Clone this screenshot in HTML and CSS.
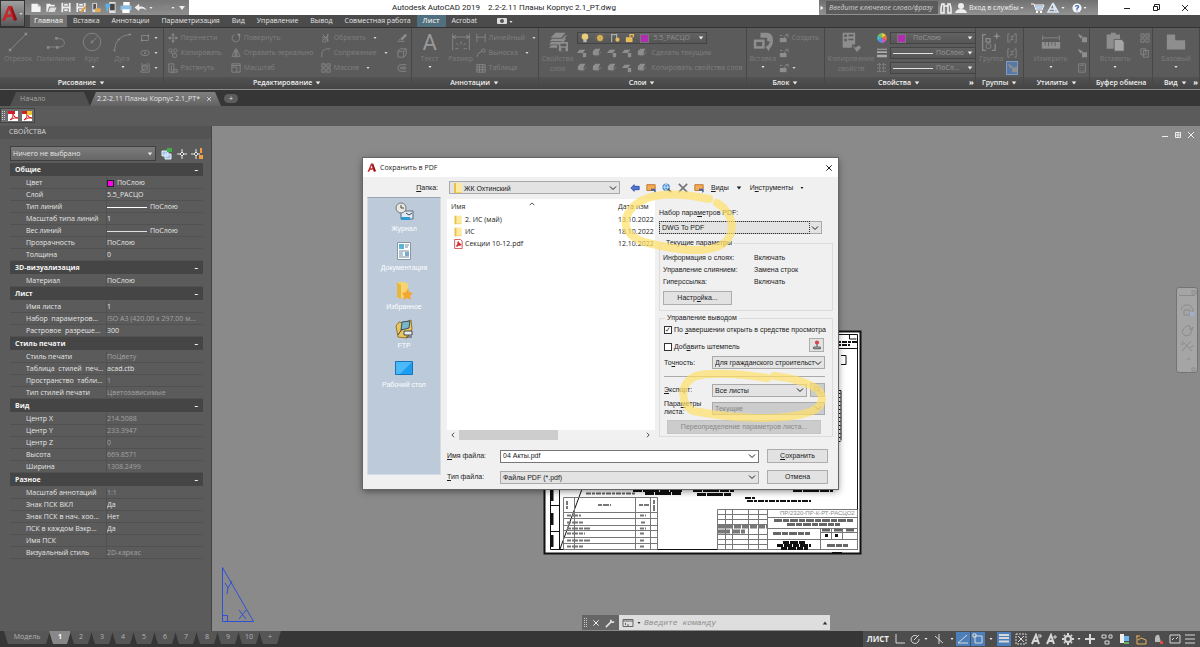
FILE: index.html
```html
<!DOCTYPE html>
<html lang="ru">
<head>
<meta charset="utf-8">
<title>Autodesk AutoCAD 2019</title>
<link rel="stylesheet" href="styles.css">
</head>
<body>
<svg class="defs" aria-hidden="true">
  <symbol id="logo" viewBox="0 0 20 20"><path fill="#c4262b" d="M1 18 8 1h4l5 15-4 1-1-4-6 1-1 3zM7 11l4-1-2-5z"/><path fill="#8e1419" d="M12 1l6 15-3 2-4-14z"/></symbol>
  <symbol id="down" viewBox="0 0 8 8"><path fill="currentColor" d="M1 2h6L4 6z"/></symbol>
  <symbol id="chev" viewBox="0 0 8 8"><path fill="none" stroke="currentColor" d="M1 2.500l3 3 3-3"/></symbol>
  <symbol id="new" viewBox="0 0 14 12"><path fill="#f4f4f4" d="M2 2h7l3 3v6H2z"/><path fill="#aaa" d="M9 2v3h3z"/></symbol>
  <symbol id="open" viewBox="0 0 14 12"><path fill="#f0f0f0" d="M2 2h4l1 1h4v2H5L3 11H2z"/><path fill="#ddd" d="M6 6h7l-2 5H4z"/></symbol>
  <symbol id="save" viewBox="0 0 14 12"><path fill="#eee" d="M2 1h10v10H2z"/><path fill="#777" d="M4 1h6v4H4zM4 7h6v4H4z"/><path fill="#eee" d="M5 2h4v2H5zM5 8h4v2H5z"/></symbol>
  <symbol id="saveas" viewBox="0 0 14 12"><use href="#save"/><path stroke="#e89a35" stroke-width="2" d="M7 11l5-6"/></symbol>
  <symbol id="openweb" viewBox="0 0 14 12"><path fill="#ddd" d="M3 1h5v10H3z"/><path fill="#555" d="M4 2h3v6H4z"/><path fill="#e4ac55" d="M6 7h6v4H6z"/></symbol>
  <symbol id="saveweb" viewBox="0 0 14 12"><path fill="#ddd" d="M5 0h7v12H5z"/><path fill="#444" d="M6 2h5v7H6z"/><path fill="#5bb3e8" d="M1 2h5v4H4v4H2V6H1z"/></symbol>
  <symbol id="print" viewBox="0 0 14 12"><path fill="#fff" d="M4 0h7v4H4z"/><path fill="#8bc0e6" d="M1 4h12v5H1z"/><path fill="#fff" d="M3 8h8v4H3z"/></symbol>
  <symbol id="undo" viewBox="0 0 14 12"><path fill="currentColor" d="M0 6l5-4v3q6-1 8 4-4-3-8-1v2z"/></symbol>
  <symbol id="binoc" viewBox="0 0 14 12"><path fill="none" stroke="#f2f2f2" stroke-width="1.500" d="M3 2h2v9H2V6zM9 2h2l1 4v5H9zM5 4h4"/></symbol>
  <symbol id="person" viewBox="0 0 14 12"><circle cx="7" cy="4" r="3" fill="#eee"/><path fill="#eee" d="M1 11q1-4 6-4t6 4z"/></symbol>
  <symbol id="cart" viewBox="0 0 14 12"><path fill="none" stroke="#fff" d="M0 2h3l2 6h6l2-5H4"/><path fill="#b7d2ec" d="M4 4h8l-1 3H5z"/><path fill="#fff" d="M5 9h2v2H5zM9 9h2v2H9z"/></symbol>
  <symbol id="a360" viewBox="0 0 14 12"><path fill="none" stroke="#dce9f6" stroke-width="1.500" d="M7 1L2 10h10L7 1l2 8M4 7h7"/></symbol>
  <symbol id="help" viewBox="0 0 12 12"><circle cx="6" cy="6" r="5.500" fill="#f4f7fb"/><path fill="none" stroke="#3a68a8" stroke-width="1.500" d="M4 4.500Q4 3 6 3t2 1.500q0 1-2 2V8M6 9v1"/></symbol>

  <symbol id="line" viewBox="0 0 24 24"><path class="st" d="M3 21L21 3"/><path class="fi" d="M1 20h3v3H1zM20 1h3v3h-3z"/></symbol>
  <symbol id="pline" viewBox="0 0 24 24"><path class="st" d="M3 18h14q5-1 5-5t-5-5h-4"/><path class="fi" d="M1 17h3v3H1zM12 17h3v3h-3zM11 6h3v3h-3z"/></symbol>
  <symbol id="circle" viewBox="0 0 24 24"><circle class="st" cx="12" cy="12" r="10.500"/><path class="st" d="M12 12l6-6M10 12h4M12 10v4"/></symbol>
  <symbol id="arc" viewBox="0 0 24 24"><path class="st" d="M3 22Q4 5 21 3"/><path class="fi" d="M2 21h2v2H2zM7 8h2v2H7zM20 2h3v2h-3z"/></symbol>
  <symbol id="rect" viewBox="0 0 12 12"><path class="st" d="M2 3h8v6H2z"/><path class="fi" d="M1 8h2v2H1zM9 2h2v2H9z"/></symbol>
  <symbol id="ellipse" viewBox="0 0 12 12"><ellipse class="st" cx="6" cy="6" rx="5" ry="3"/><path class="fi" d="M5 5h2v2H5z"/></symbol>
  <symbol id="hatch" viewBox="0 0 12 12"><path class="st" d="M2.500 2.500h6v6h-6zM1 1h2M9 1h2v10H1v-2M2 6l4-4M3 9l5-6"/></symbol>
  <symbol id="move" viewBox="0 0 12 12"><path class="st" d="M6 1v10M1 6h10"/><path class="fi" d="M6 0l2 3H4zM6 12l2-3H4zM0 6l3-2v4zM12 6L9 4v4z"/></symbol>
  <symbol id="copy" viewBox="0 0 12 12"><circle class="st" cx="3" cy="3" r="2"/><circle class="st" cx="9" cy="3" r="2"/><circle class="st" cx="8" cy="9" r="2.500"/><path class="st" d="M4 5l2 3"/></symbol>
  <symbol id="stretch" viewBox="0 0 12 12"><path class="st" d="M1 1h6v10H1zM7 8h4v3H4M4 3v6M3 8l1 1 1-1"/></symbol>
  <symbol id="rotate" viewBox="0 0 12 12"><path class="st" d="M4 2a4.500 4.500 0 1 0 5 1"/><path class="fi" d="M7 1h4v4z"/></symbol>
  <symbol id="mirror" viewBox="0 0 12 12"><path class="st" d="M5 2L1 10h4zM7 2l4 8H7zM6 0v12"/></symbol>
  <symbol id="scale" viewBox="0 0 12 12"><path class="st" d="M1 1h10v10H1zM1 5h6v6M1 3h10"/></symbol>
  <symbol id="trim" viewBox="0 0 12 12"><path class="st" d="M2 2l7 7M9 2L6 6M1 5h5M8 1v10"/><circle class="st" cx="4" cy="9" r="2"/></symbol>
  <symbol id="fillet" viewBox="0 0 12 12"><path class="st" d="M1 11V7q0-5 6-6h4"/></symbol>
  <symbol id="array" viewBox="0 0 12 12"><path class="st" d="M1 1h4v4H1zM7 1h4v4H7zM1 7h4v4H1zM7 7h4v4H7zM3 3h1M9 3h1"/></symbol>
  <symbol id="erase" viewBox="0 0 12 12"><path class="fi" d="M4 7l6-6 2 2-6 6z"/><path class="st" d="M1 10h8M4 7l-2 2"/></symbol>
  <symbol id="box" viewBox="0 0 12 12"><path class="st" d="M1 4h7v7H1zM1 4l3-3h7v7l-3 3M8 4l3-3"/></symbol>
  <symbol id="offset" viewBox="0 0 12 12"><path class="st" d="M11 2H5Q1 2 1 6t4 4h6M11 5H6Q4 5 4 6t2 1h5"/></symbol>
  <symbol id="dim" viewBox="0 0 24 24"><path class="st" d="M2 2v20M22 2v20M2 6h20M2 6l4-2M2 6l4 2M22 6l-4-2M22 6l-4 2M12 11v4M6 13l3 3M18 13l-3 3M5 20h4M15 20h4"/></symbol>
  <symbol id="lindim" viewBox="0 0 12 12"><path class="st" d="M1 1v10M11 1v10M1 5h10"/></symbol>
  <symbol id="leader" viewBox="0 0 12 12"><path class="st" d="M1 11l2-5 4-2"/><circle class="st" cx="9" cy="3" r="2"/></symbol>
  <symbol id="tbl" viewBox="0 0 12 12"><path class="st" d="M1 2h10v9H1zM1 5h10M4 2v9M8 2v9M1 8h10"/></symbol>
  <symbol id="layers" viewBox="0 0 24 24"><path class="fi" d="M3 7l6-6h12l-5 6zM2 11l3-3h12l5-5v2l-5 6zM1 15l3-3h12l5-5v2l-5 6zM1 19l3-3h7v3zM13 12h11v11H13z"/><path fill="#5b5b5b" d="M15 14h7v3h-7zM16 19h5v4h-5z"/></symbol>
  <symbol id="lay" viewBox="0 0 12 12"><path class="fi" d="M0 6l3-4h7L7 6z"/><path class="fi" d="M7 6h4v5H7z"/></symbol>
  <symbol id="lay2" viewBox="0 0 12 12"><path class="fi" d="M1 4l3-3h6L8 5v3l-4 1-3-1z"/><path class="st" d="M6 10l5-5"/></symbol>
  <symbol id="insert" viewBox="0 0 24 24"><path class="fi" d="M1 9h13v11H1z"/><path fill="#5b5b5b" d="M4 12h7v5H4z"/><path class="fi" d="M9 1h8q7 1 7 9 0 7-4 10l-1 3-4-5q5-3 5-7h-3V7H9z"/></symbol>
  <symbol id="blk" viewBox="0 0 12 12"><path class="fi" d="M1 6h8v5H1z"/><path class="st" d="M5 7l5-6M8 2h3v3M1 3h3"/></symbol>
  <symbol id="match" viewBox="0 0 24 24"><path class="fi" d="M2 1h15v14h-4v4H2z"/><path fill="#5b5b5b" d="M4 3h3v3H4zM9 3h6v2H9zM4 8h3v3H4zM9 8h6v2H9z"/><path class="fi" d="M13 15l4 4 5-3 2 3-5 5z"/></symbol>
  <symbol id="wheel" viewBox="0 0 12 12"><path fill="#e9c43f" d="M6 6V0a6 6 0 0 1 5 3z"/><path fill="#e6713d" d="M6 6l5-3a6 6 0 0 1 0 6z"/><path fill="#c95bc0" d="M6 6l5 3a6 6 0 0 1-5 3z"/><path fill="#558de0" d="M6 6v6a6 6 0 0 1-5-3z"/><path fill="#44b9c8" d="M6 6L1 9a6 6 0 0 1 0-6z"/><path fill="#75c45b" d="M6 6L1 3a6 6 0 0 1 5-3z"/></symbol>
  <symbol id="lw" viewBox="0 0 12 12"><path fill="#ababab" d="M0 1h12v1H0zM0 4h12v2H0zM0 8h12v3H0z"/></symbol>
  <symbol id="lt" viewBox="0 0 12 12"><path class="st" d="M0 2h12M0 6h12M0 10h12M3 0v12M8 0v12" stroke-dasharray="2 1"/></symbol>
  <symbol id="group" viewBox="0 0 24 24"><path class="st" stroke-width="1.500" d="M6 3H2v19h4M13 22h4v-8M6 8h5v4H6z"/><circle class="st" cx="9" cy="17" r="3"/><path class="fi" d="M19 0l1 4 4 1-4 1-1 4-1-4-4-1 4-1z"/></symbol>
  <symbol id="grp" viewBox="0 0 12 12"><path class="st" d="M3 1H1v10h2M9 1h2v10H9M4 4h3M5 8h3M3 10l6-8"/></symbol>
  <symbol id="measure" viewBox="0 0 24 24"><path class="st" d="M2 7h20M2 4v6M22 4v6"/><path class="fi" d="M1 12h22v8H1z"/><path stroke="#5b5b5b" d="M5 12v4M9 12v5M13 12v4M17 12v5"/></symbol>
  <symbol id="pick" viewBox="0 0 12 12"><path class="fi" d="M1 1l6 3-3 3zM6 5h6v6H6z"/></symbol>
  <symbol id="calc" viewBox="0 0 12 12"><path class="st" d="M2 1h8v10H2zM4 3h4M4 6h1M7 6h1M4 9h1M7 9h1"/></symbol>
  <symbol id="paste" viewBox="0 0 24 24"><path class="fi" d="M2 3h16v17H2zM7 1h6v4H7z"/><path fill="#a5a5a5" stroke="#5b5b5b" d="M11 9h9l3 3v11H11z"/></symbol>
  <symbol id="pages" viewBox="0 0 12 12"><path class="st" d="M1 1h6v7H1zM4 3h6v8H4z"/></symbol>
  <symbol id="base" viewBox="0 0 24 24"><path class="fi" d="M1 3h10v7h12v11H1z"/></symbol>
  <symbol id="bulb" viewBox="0 0 12 12"><circle cx="6" cy="4.500" r="4" fill="#e9cd7b"/><path fill="#bbb" d="M4 8h4v3H4z"/></symbol>
  <symbol id="sun" viewBox="0 0 12 12"><circle cx="6" cy="6" r="3.500" fill="#e9bd5b"/><path stroke="#b8984e" stroke-dasharray="1 1" d="M6 0v12M0 6h12M2 2l8 8M10 2l-8 8"/></symbol>
  <symbol id="vp" viewBox="0 0 12 12"><path fill="none" stroke="#ccc" d="M2 1v10M8 1v6M2 2h6"/><circle cx="9" cy="8" r="2.500" fill="#e9bd5b"/></symbol>
  <symbol id="lock" viewBox="0 0 12 12"><path fill="#ebbb5c" d="M1 5h8v6H1z"/><path fill="none" stroke="#ebbb5c" stroke-width="1.500" d="M6 5V2h4v3"/></symbol>

  <symbol id="pdf" viewBox="0 0 12 12"><path fill="#fff" d="M1 1h10v10H1z"/><path fill="#cf2027" d="M1 1h7v3H1z"/><path fill="none" stroke="#cf2027" d="M3 10q4-3 3-6 1 4 5 4-4-1-8 2"/></symbol>
  <symbol id="fold" viewBox="0 0 12 12"><path fill="#f5d267" d="M2 1h8v10H2z"/><path fill="#fde9a0" d="M3 1h7v9H3z"/><path fill="#eac04d" d="M2 1h2v10H2z"/></symbol>
  <symbol id="back" viewBox="0 0 12 12"><path fill="#4d78d8" stroke="#2c489c" d="M1 6l4-4v2h6v4H5v2z"/></symbol>
  <symbol id="up" viewBox="0 0 12 12"><path fill="#f4ab4f" stroke="#b76a28" d="M1 2h10v7H1z"/><path fill="#345db0" d="M6 7h5v1l1 2-2 2V9H6z"/></symbol>
  <symbol id="websearch" viewBox="0 0 12 12"><circle cx="5" cy="5" r="4.500" fill="#4d8ed4"/><path stroke="#d9efff" fill="none" d="M1 5h8M5 1q-4 4 0 8M5 1q4 4 0 8"/><path stroke="#555" stroke-width="2" d="M7 7l4 4"/></symbol>
  <symbol id="cross" viewBox="0 0 12 12"><path stroke="currentColor" stroke-width="2" d="M1 1l10 10M11 1L1 11"/></symbol>
  <symbol id="x" viewBox="0 0 12 12"><path stroke="currentColor" stroke-width="1.500" d="M2 2l8 8M10 2l-8 8"/></symbol>
  <symbol id="wrench" viewBox="0 0 12 12"><path fill="none" stroke="#ddd" stroke-width="2" d="M1 11l6-6M7 2v3h4"/></symbol>
</svg>

<header class="head">
  <button class="app" aria-label="Меню приложения"><svg class="i22"><use href="#logo"/></svg><svg class="i4"><use href="#down"/></svg></button>
  <div class="titlebar">
    <div class="qat">
      <svg class="i14"><use href="#new"/></svg><svg class="i14"><use href="#open"/></svg><svg class="i14"><use href="#save"/></svg><svg class="i14"><use href="#saveas"/></svg><svg class="i14"><use href="#openweb"/></svg><svg class="i14"><use href="#saveweb"/></svg><svg class="i14"><use href="#print"/></svg><svg class="i14"><use href="#undo"/></svg><svg class="i4"><use href="#down"/></svg><svg class="i14 dim flip"><use href="#undo"/></svg><svg class="i4"><use href="#down"/></svg><svg class="i8"><use href="#down"/></svg>
    </div>
    <h1 class="title"><span>Autodesk AutoCAD 2019</span><span>2.2-2.11 Планы Корпус 2.1_PT.dwg</span></h1>
    <div class="search">
      <svg class="i6 side"><use href="#down"/></svg>
      <input class="query" aria-label="Поиск" placeholder="Введите ключевое слово/фразу">
      <svg class="i14"><use href="#binoc"/></svg><svg class="i14"><use href="#person"/></svg>
      <button class="plain">Вход в службы</button><svg class="i4"><use href="#down"/></svg>
      <svg class="i14 push"><use href="#cart"/></svg><svg class="i14"><use href="#a360"/></svg><svg class="i4"><use href="#down"/></svg>
      <svg class="i10 push"><use href="#help"/></svg><svg class="i4"><use href="#down"/></svg>
    </div>
    <div class="winbtns">
      <button class="plain" aria-label="Свернуть"><svg class="i8" viewBox="0 0 8 8"><path stroke="#222" d="M1 4.500h6"/></svg></button>
      <button class="plain" aria-label="Восстановить"><svg class="i8" viewBox="0 0 8 8"><path fill="none" stroke="#222" d="M1.500 2.500h4v4h-4zM2.500 2V.5h5v5H6"/></svg></button>
      <button class="plain" aria-label="Закрыть"><svg class="i8" viewBox="0 0 8 8"><path stroke="#222" d="M1 1l6 6M7 1L1 7"/></svg></button>
    </div>
  </div>
  <nav class="tabs">
    <a class="on" href="#">Главная</a><a href="#">Вставка</a><a href="#">Аннотации</a><a href="#">Параметризация</a><a href="#">Вид</a><a href="#">Управление</a><a href="#">Вывод</a><a href="#">Совместная работа</a><a class="ctx" href="#">Лист</a><a href="#">Acrobat</a>
    <svg class="i14 push2" viewBox="0 0 14 12"><rect x="2" y="3" width="10" height="6" rx="1" fill="#ddd"/><circle cx="7" cy="6" r="2" fill="#555"/></svg><svg class="i4"><use href="#down"/></svg>
  </nav>
</header>

<section class="ribbon" aria-label="Лента">
  <div class="panel w164"><div class="tools draw">
    <button class="big"><svg class="i20"><use href="#line"/></svg>Отрезок</button>
    <button class="big"><svg class="i20"><use href="#pline"/></svg>Полилиния</button>
    <button class="big"><svg class="i20"><use href="#circle"/></svg>Круг<svg class="i4"><use href="#down"/></svg></button>
    <button class="big"><svg class="i20"><use href="#arc"/></svg>Дуга<svg class="i4"><use href="#down"/></svg></button>
    <div class="col"><span><svg class="i10"><use href="#rect"/></svg><svg class="i4"><use href="#down"/></svg></span><span><svg class="i10"><use href="#ellipse"/></svg><svg class="i4"><use href="#down"/></svg></span><span><svg class="i10"><use href="#hatch"/></svg><svg class="i4"><use href="#down"/></svg></span></div>
  </div><h2>Рисование<svg class="i6"><use href="#down"/></svg></h2></div>

  <div class="panel w249"><div class="tools edit">
    <div class="col"><span><svg class="i10"><use href="#move"/></svg>Перенести</span><span><svg class="i10"><use href="#copy"/></svg>Копировать</span><span><svg class="i10"><use href="#stretch"/></svg>Растянуть</span></div>
    <div class="col"><span><svg class="i10"><use href="#rotate"/></svg>Повернуть</span><span><svg class="i10"><use href="#mirror"/></svg>Отразить зеркально</span><span><svg class="i10"><use href="#scale"/></svg>Масштаб</span></div>
    <div class="col"><span><svg class="i10"><use href="#trim"/></svg>Обрезать<svg class="i4 gap"><use href="#down"/></svg></span><span><svg class="i10"><use href="#fillet"/></svg>Сопряжение<svg class="i4 gap"><use href="#down"/></svg></span><span><svg class="i10"><use href="#array"/></svg>Массив<svg class="i4 gap"><use href="#down"/></svg></span></div>
    <div class="col"><span><svg class="i10"><use href="#erase"/></svg></span><span><svg class="i10"><use href="#box"/></svg></span><span><svg class="i10"><use href="#offset"/></svg></span></div>
  </div><h2>Редактирование<svg class="i6"><use href="#down"/></svg></h2></div>

  <div class="panel w127"><div class="tools anno">
    <button class="big"><span class="bigA">A</span>Текст<svg class="i4"><use href="#down"/></svg></button>
    <button class="big"><svg class="i20"><use href="#dim"/></svg>Размер</button>
    <div class="col"><span><svg class="i10"><use href="#lindim"/></svg>Линейный<svg class="i4 gap"><use href="#down"/></svg></span><span><svg class="i10"><use href="#leader"/></svg>Выноска<svg class="i4 gap"><use href="#down"/></svg></span><span><svg class="i10"><use href="#tbl"/></svg>Таблица</span></div>
  </div><h2>Аннотации<svg class="i6"><use href="#down"/></svg></h2></div>

  <div class="panel w209"><div class="tools lays">
    <button class="big"><svg class="i20"><use href="#layers"/></svg>Свойства<br>слоя</button>
    <div class="col">
      <button class="drop layer"><svg class="i10"><use href="#bulb"/></svg><svg class="i10"><use href="#sun"/></svg><svg class="i10"><use href="#vp"/></svg><svg class="i10"><use href="#lock"/></svg><i class="sw"></i>5.5_РАСЦО<svg class="i6 end"><use href="#down"/></svg></button>
      <span class="sp"><svg class="i10"><use href="#lay"/></svg><svg class="i10"><use href="#lay2"/></svg><svg class="i10"><use href="#lay"/></svg><svg class="i10"><use href="#lay"/></svg><svg class="i10"><use href="#lay2"/></svg>Сделать текущим</span>
      <span class="sp"><svg class="i10"><use href="#lay2"/></svg><svg class="i10"><use href="#lay2"/></svg><svg class="i10"><use href="#lay2"/></svg><svg class="i10"><use href="#lay"/></svg><svg class="i10"><use href="#lay2"/></svg>Копировать свойства слоя</span>
    </div>
  </div><h2>Слои<svg class="i6"><use href="#down"/></svg></h2></div>

  <div class="panel w78"><div class="tools block">
    <button class="big"><svg class="i20"><use href="#insert"/></svg>Вставка<svg class="i4"><use href="#down"/></svg></button>
    <div class="col"><span><svg class="i10"><use href="#blk"/></svg>Создать</span><span><svg class="i10"><use href="#blk"/></svg></span><span><svg class="i10"><use href="#blk"/></svg><svg class="i4"><use href="#down"/></svg></span></div>
  </div><h2>Блок<svg class="i6"><use href="#down"/></svg></h2></div>

  <div class="panel w151"><div class="tools propst">
    <button class="big"><svg class="i20"><use href="#match"/></svg>Копирование<br>свойств</button>
    <div class="col grow">
      <span><svg class="i10"><use href="#wheel"/></svg><button class="drop"><i class="sw ind"></i>ПоСлою<svg class="i6 end"><use href="#down"/></svg></button></span>
      <span><svg class="i10"><use href="#lw"/></svg><button class="drop"><i class="ln"></i>ПоСлою<svg class="i6 end lite"><use href="#down"/></svg></button></span>
      <span><svg class="i10"><use href="#lt"/></svg><button class="drop"><i class="ln"></i>ПоСл...<svg class="i6 end lite"><use href="#down"/></svg></button></span>
    </div>
  </div><h2 class="more">Свойства<svg class="i6"><use href="#down"/></svg><b class="corner">»</b></h2></div>

  <div class="panel w48"><div class="tools grps">
    <button class="big"><svg class="i20"><use href="#group"/></svg>Группа</button>
    <div class="col"><span><svg class="i10"><use href="#grp"/></svg></span><span><svg class="i10"><use href="#grp"/></svg></span><span class="active"><svg class="i10"><use href="#pick"/></svg></span></div>
  </div><h2>Группы<svg class="i6"><use href="#down"/></svg></h2></div>

  <div class="panel w65"><div class="tools utils">
    <button class="big"><svg class="i20"><use href="#measure"/></svg>Измерить<svg class="i4"><use href="#down"/></svg></button>
    <div class="col"><span><svg class="i10"><use href="#pick"/></svg></span><span><svg class="i10"><use href="#pick"/></svg></span><span><svg class="i10"><use href="#calc"/></svg></span></div>
  </div><h2>Утилиты<svg class="i6"><use href="#down"/></svg></h2></div>

  <div class="panel w63"><div class="tools utils">
    <button class="big"><svg class="i20"><use href="#paste"/></svg>Вставить<svg class="i4"><use href="#down"/></svg></button>
    <div class="col"><span><svg class="i10"><use href="#array"/></svg></span><span><svg class="i10"><use href="#pages"/></svg></span></div>
  </div><h2>Буфер обмена</h2></div>

  <div class="panel w45"><div class="tools view">
    <button class="big"><svg class="i20"><use href="#base"/></svg>Базовый<svg class="i4"><use href="#down"/></svg></button>
  </div><h2 class="more">Вид<svg class="i6"><use href="#down"/></svg><b class="corner">»</b></h2></div>
</section>

<nav class="doctabs">
  <a class="doc start" href="#">Начало</a>
  <a class="doc cur" href="#">2.2-2.11 Планы Корпус 2.1_PT*<svg class="i6"><use href="#x"/></svg></a>
  <button class="plus" aria-label="Новая вкладка">+</button>
</nav>
<div class="strip"><div class="pdfbar"><i class="grip"></i><svg class="i12"><use href="#pdf"/></svg><svg class="i12" viewBox="0 0 12 12"><use href="#pdf"/><path fill="#f0c52e" d="M6 1h5v4H6z"/></svg></div></div>

<main class="work">
  <aside class="props">
    <h2 class="phead">СВОЙСТВА</h2>
    <div class="pick">
      <div class="sel"><select aria-label="Выбор"><option>Ничего не выбрано</option></select><svg class="i6"><use href="#down"/></svg></div>
      <svg class="i12" viewBox="0 0 12 12"><path fill="#9cc4ea" stroke="#e8f2fb" d="M1 3h6v5H1zM4 6h6v5H4z"/><path fill="#3fae49" d="M6 0h5v4H6z"/></svg>
      <svg class="i12" viewBox="0 0 12 12"><path fill="none" stroke="#e8e8e8" d="M6 1v3M6 8v3M1 6h3M8 6h3M6 4l2 2-2 2-2-2z"/></svg>
      <svg class="i12" viewBox="0 0 12 12"><path fill="none" stroke="#e8e8e8" d="M5 1v3M5 8v3M0 6h3M7 6h2M5 4l2 2-2 2-2-2z"/><path fill="#f0a040" d="M9 0h2v5H9zM8 7h4v4H8z"/></svg>
    </div>
    <table>
      <tbody><tr class="sec"><th colspan="2">Общие<b>–</b></th></tr>
      <tr><th>Цвет</th><td><i class="sw sm"></i>ПоСлою</td></tr>
      <tr><th>Слой</th><td>5.5_РАСЦО</td></tr>
      <tr><th>Тип линий</th><td><i class="ln bold"></i>ПоСлою</td></tr>
      <tr><th>Масштаб типа линий</th><td>1</td></tr>
      <tr><th>Вес линий</th><td><i class="ln"></i>ПоСлою</td></tr>
      <tr><th>Прозрачность</th><td>ПоСлою</td></tr>
      <tr><th>Толщина</th><td>0</td></tr></tbody>
      <tbody><tr class="sec"><th colspan="2">3D-визуализация<b>–</b></th></tr>
      <tr><th>Материал</th><td>ПоСлою</td></tr></tbody>
      <tbody><tr class="sec"><th colspan="2">Лист<b>–</b></th></tr>
      <tr><th>Имя листа</th><td>1</td></tr>
      <tr><th>Набор&nbsp; параметров...</th><td class="ro">ISO A3 (420.00 x 297.00 м...</td></tr>
      <tr><th>Растровое&nbsp; разреше...</th><td>300</td></tr></tbody>
      <tbody><tr class="sec"><th colspan="2">Стиль печати<b>–</b></th></tr>
      <tr><th>Стиль печати</th><td class="ro">ПоЦвету</td></tr>
      <tr><th>Таблица&nbsp; стилей&nbsp; печ...</th><td>acad.ctb</td></tr>
      <tr><th>Пространство&nbsp; табли...</th><td class="ro">1</td></tr>
      <tr><th>Тип стилей печати</th><td class="ro">Цветозависимые</td></tr></tbody>
      <tbody><tr class="sec"><th colspan="2">Вид<b>–</b></th></tr>
      <tr><th>Центр X</th><td class="ro">214.5088</td></tr>
      <tr><th>Центр Y</th><td class="ro">233.3947</td></tr>
      <tr><th>Центр Z</th><td class="ro">0</td></tr>
      <tr><th>Высота</th><td class="ro">669.8571</td></tr>
      <tr><th>Ширина</th><td class="ro">1308.2499</td></tr></tbody>
      <tbody><tr class="sec"><th colspan="2">Разное<b>–</b></th></tr>
      <tr><th>Масштаб аннотаций</th><td class="ro">1:1</td></tr>
      <tr><th>Знак ПСК ВКЛ</th><td>Да</td></tr>
      <tr><th>Знак ПСК в нач. хоо...</th><td>Нет</td></tr>
      <tr><th>ПСК в каждом Вэкр...</th><td>Да</td></tr>
      <tr><th>Имя ПСК</th><td></td></tr>
      <tr><th>Визуальный стиль</th><td class="ro">2D-каркас</td></tr></tbody>
    </table>
  </aside>

  <section class="canvas" aria-label="Чертёж">
    <div class="vpbtns"><svg class="i8" viewBox="0 0 8 8"><path stroke="#eee" d="M1 5.500h6"/></svg><svg class="i8" viewBox="0 0 8 8"><path fill="none" stroke="#eee" d="M1.500 1.500h5v5h-5zM3 3h2v2H3z"/></svg><svg class="i8" viewBox="0 0 8 8"><path stroke="#eee" d="M1 1l6 6M7 1L1 7"/></svg></div>

    <svg class="ucs" viewBox="220 565 36 60"><path fill="none" stroke="#2e4fd6" d="M222.500 567.500v54h31zM227.500 615.500h-5M227.500 615.500v6M225 583l3 5 4-7M228 588l-1 6M239 610l7 9M246 610l-7 9"/></svg>

    <svg class="sheet" viewBox="543 330 320 226">
      <path fill="#fff" stroke="#111" stroke-width="2" d="M544.500 331.500h316v222h-316z"/>
      <path fill="none" stroke="#111" d="M550.500 334.500h307v215h-307zM559.500 334v216M560 549l22-60M838 348.500h19M849.500 335v4h7M841 355.500h5v9h-5M838 390.500h3v50"/>
      <path stroke="#111" stroke-width="3" d="M552 487v14M552 513v12M552 535v12"/><path stroke="#111" d="M550 505.500h9M550 531.500h9"/>
      <path stroke="#111" stroke-width="2" stroke-dasharray="3 1 5 1" d="M838 342h19M838 345h12"/>
      <path stroke="#111" stroke-width="2" stroke-dasharray="1 3" d="M839.500 393v50"/>
      <path stroke="#111" stroke-width="3" stroke-dasharray="9 1 16 1" d="M633 490.500h49M645 493.500h36M693 490.500h41M697 494.500h34M793 490.500h40"/>
      <path stroke="#666" stroke-width="2" stroke-dasharray="5 1 3 1" d="M586 493.500h50"/>
      <path stroke="#111" stroke-width="2" stroke-dasharray="6 1 3 1" d="M745 498h11M747 501h64"/>
      <g fill="none" stroke="#777"><path d="M563.500 497.500h94v52h-94zM574.500 497v52M635.500 497v52M650.500 497v52M563 512.500h94M563 518.500h94M563 525.500h94M563 530.500h94M563 537.500h94M563 543.500h94"/>
      <path d="M717.500 509.500h140v40h-140zM725.500 509v40M732.500 509v40M748.500 509v40M758.500 509v40M767.500 509v40M820.500 528v21M717 514.500h50M717 519.500h50M717 524.500h50M717 534.500h50M717 539.500h50M717 544.500h50M767 517.500h90M767 528.500h90M767 539.500h90M820 532.500h37M831.500 528v11M842.500 528v11"/></g>
      <path stroke="#777" stroke-width="2" stroke-dasharray="4 1 6 1" d="M567 515.500h14M567 522.500h16M567 528.500h24M567 533.500h18M567 540.500h24M567 546.500h17M598 505h13M639 505h10M640 515.500h6M641 522.500h4M640 528.500h6M640 533.500h5M640 540.500h5M640 546.500h5M567 501v8M654 500v12"/>
      <path stroke="#777" stroke-width="4" stroke-dasharray="7 1" d="M718 526.500h49M718 531.500h12M733 531.500h12"/>
      <path stroke="#666" stroke-width="3" stroke-dasharray="8 1 6 1" d="M774 520.500h79M787 524.500h53M773 533.500h37M822 530h8M834 530h8M846 530h8M827 545.500h21"/>
      <path stroke="#111" stroke-width="3" stroke-dasharray="6 1 8 1" d="M783 542.500h23M777 545.500h34M781 548.500h27M825 535.500h3M835 535.500h3"/>
      <path stroke="#111" stroke-width="2" d="M832 553h10"/>
      <text class="code" x="780" y="515">ПР/2320-ПР-К-РТ-РАСЦО2</text>
    </svg>

    <div class="navbar"><svg viewBox="0 0 20 84"><path fill="none" stroke="#8b8b8b" d="M2 7.500h16M15 3h4v3h-4zM4 22a6 6 0 1 1 11 4M7 22h6v5H7zM5 44q4-8 8-6v4l3-3-3 8-5 1zM5 53l10 10M14 53L5 63M3 56h4M13 60l4-3M10 71h3M15 80h3v3h-3z"/><path fill="#9fb0ce" d="M13 24h4v4h-4z"/></svg></div>

    <div class="cmd">
      <div class="cmdl"><i class="grip"></i><svg class="i8"><use href="#x"/></svg><svg class="i10"><use href="#wrench"/></svg></div>
      <svg class="i12" viewBox="0 0 12 12"><path fill="none" stroke="#666" d="M1 2.500h10v7H1zM1 4h10M3 6l1 1-1 1M5 8h2"/></svg><svg class="i4"><use href="#down"/></svg>
      <input aria-label="Команда" placeholder="Введите команду"><svg class="i6 upside"><use href="#down"/></svg>
    </div>

    <form class="dialog" role="dialog" aria-label="Сохранить в PDF">
      <div class="dtitle"><svg class="i10"><use href="#logo"/></svg><span>Сохранить в PDF</span><button type="button" class="plain" aria-label="Закрыть"><svg class="i8"><use href="#x"/></svg></button></div>
      <div class="dbody">
        <div class="topbar">
          <label for="dir"><u>П</u>апка:</label>
          <div class="sel pic"><svg class="i12 lead"><use href="#fold"/></svg><select id="dir"><option>ЖК Охтинский</option></select><svg class="i8"><use href="#chev"/></svg></div>
          <div class="dtools"><svg class="i10"><use href="#back"/></svg><svg class="i10"><use href="#up"/></svg><svg class="i10"><use href="#websearch"/></svg><svg class="i10 gray"><use href="#cross"/></svg><svg class="i10"><use href="#up"/></svg></div>
          <button type="button" class="plain menu"><span><u>В</u>иды</span><svg class="i6"><use href="#down"/></svg></button>
          <button type="button" class="plain menu"><span>И<u>н</u>струменты</span><svg class="i4"><use href="#down"/></svg></button>
        </div>
        <div class="places">
          <a href="#"><svg class="i20" viewBox="0 0 20 20"><path fill="#dfeaf5" stroke="#5a6b80" d="M7 9h12v8H7z"/><path fill="#2e9bd0" d="M7 15h9v3H7z"/><circle cx="7" cy="6" r="5" fill="#e9e9e2" stroke="#777"/><path fill="none" stroke="#444" d="M7 3v3h3M12 11l3 2 3-2"/></svg>Журнал</a>
          <a href="#"><svg class="i20" viewBox="0 0 20 20"><path fill="#fff" stroke="#8a94a3" d="M3.500 1.500h13v17h-13z"/><path fill="#59b4d4" d="M5 3h5v5H5z"/><path stroke="#6d8b9d" d="M11 4h4M11 6h3M5 10h10M5 12h4M5 14h4M5 16h10"/><path fill="#7ac" d="M11 11h4v4h-4z"/></svg>Документация</a>
          <a href="#"><svg class="i20" viewBox="0 0 20 20"><path fill="#f6d472" d="M3 2h8l3 2v14H3z"/><path fill="#e6b643" d="M3 2l4 3v14l-4-2z"/><path fill="#f3a72e" d="M14 8l1 4 4 1-3 3 1 4-4-2-4 2 1-4-2-3 4-1z"/></svg>Избранное</a>
          <a href="#"><svg class="i20" viewBox="0 0 20 20"><path fill="#e9c763" stroke="#9b7427" d="M2 7l3-4 4 1 8-3 1 9-5 9-9-1z"/><path fill="#7ab6c9" stroke="#356" d="M8 3l8-1-1 7-8 2z"/><path fill="#e9eef2" stroke="#444" d="M10 12h8v4h-8zM4 16l4-6M12 18h6"/></svg>FTP</a>
          <a href="#"><svg class="i20" viewBox="0 0 20 20"><path fill="#1e9df0" stroke="#1377bf" d="M1.500 3.500h17v13h-17z"/><path fill="#4cb9fa" d="M2 4h16L6 16H2z"/></svg>Рабочий стол</a>
        </div>
        <div class="files">
          <table>
            <thead><tr><th>Имя<svg class="i6 sort"><use href="#chev"/></svg></th><th>Дата изм</th></tr></thead>
            <tbody>
              <tr><td><svg class="i10"><use href="#fold"/></svg>2. ИС (май)</td><td>13.10.2022</td></tr>
              <tr><td><svg class="i10"><use href="#fold"/></svg>ИС</td><td>18.10.2022</td></tr>
              <tr><td><svg class="i10" viewBox="0 0 12 12"><path fill="#fff" stroke="#c8373c" d="M2 .5h7l2 2v9H2z"/><path fill="none" stroke="#d3262c" stroke-width="1.500" d="M4 9q3-2 2-6 1 4 4 4-4 0-6 2"/></svg>Секции 10-12.pdf</td><td>12.10.2022</td></tr>
            </tbody>
          </table>
          <div class="hscroll"><svg class="i6 side2"><use href="#chev"/></svg><i></i><svg class="i6 side"><use href="#chev"/></svg></div>
        </div>
        <div class="opts">
          <label class="cap" for="preset">Набор пара<u>м</u>етров PDF:</label>
          <div class="sel focus"><select id="preset"><option>DWG To PDF</option></select><svg class="i8"><use href="#chev"/></svg></div>
          <fieldset><legend>Текущие параметры</legend>
            <dl><dt>Информация о слоях:</dt><dd>Включать</dd><dt>Управление слиянием:</dt><dd>Замена строк</dd><dt>Гиперссылка:</dt><dd>Включать</dd></dl>
            <button type="button" class="btn set">Настр<u>о</u>йка...</button>
          </fieldset>
          <fieldset class="out"><legend>Управление выводом</legend>
            <label class="chk"><input type="checkbox" checked><span>По <u>з</u>авершении открыть в средстве просмотра</span></label>
            <div class="stamp"><label class="chk"><input type="checkbox"><span>Доб<u>а</u>вить штемпель</span></label><button type="button" class="btn sq" aria-label="Штемпель"><svg class="i10" viewBox="0 0 12 12"><circle cx="6" cy="3" r="2.500" fill="#d8434a"/><path fill="none" stroke="#333" d="M6 5v3M2 8.500h8v2H2z"/></svg></button></div>
            <div class="row"><label for="prec">То<u>ч</u>ность:</label><div class="sel"><select id="prec"><option>Для гражданского строительст</option></select><svg class="i8"><use href="#chev"/></svg></div></div>
            <hr>
            <div class="row exp"><label for="exp"><u>Э</u>кспорт:</label><div class="sel"><select id="exp"><option>Все листы</option></select><svg class="i8"><use href="#chev"/></svg></div><button type="button" class="btn sq off" aria-label="Выбор области"><svg class="i10" viewBox="0 0 12 12"><path fill="none" stroke="#999" d="M2 2h5v5H2zM6 5l5 6"/></svg></button></div>
            <div class="row"><label for="pset">Пара<u>м</u>етры<br>листа:</label><div class="sel off"><select id="pset" disabled><option>Текущие</option></select><svg class="i8"><use href="#chev"/></svg></div></div>
            <button type="button" class="btn wide" disabled>Переопределение параметров листа...</button>
          </fieldset>
        </div>
        <div class="bottom">
          <label for="fname"><u>И</u>мя файла:</label>
          <div class="sel white"><input id="fname" value="04 Акты.pdf"><svg class="i8"><use href="#chev"/></svg></div>
          <button type="submit" class="btn"><u>С</u>охранить</button>
          <label for="ftype"><u>Т</u>ип файла:</label>
          <div class="sel"><select id="ftype"><option>Файлы PDF (*.pdf)</option></select><svg class="i8"><use href="#chev"/></svg></div>
          <button type="button" class="btn">Отмена</button>
        </div>
      </div>
      <svg class="marks" viewBox="363 158 475 331"><path d="M709 199C685 194 657 192 641 201 620 213 619 236 648 243 680 251 724 257 731 233 735 218 724 207 717 203"/><path d="M767 378C745 374 712 372 696 376 678 383 681 405 693 411 730 418 781 422 810 412 825 406 826 393 812 386 800 380 785 377 774 376"/></svg>
    </form>
  </section>
</main>

<footer class="foot">
  <nav class="ltabs"><a href="#">Модель</a><a class="on" href="#">1</a><a href="#">2</a><a href="#">3</a><a href="#">4</a><a href="#">5</a><a href="#">6</a><a href="#">7</a><a href="#">8</a><a href="#">9</a><a href="#">10</a><a href="#">+</a></nav>
  <div class="status">
    <b>ЛИСТ</b>
    <svg class="i12" viewBox="0 0 12 12"><path d="M2 1v9h9"/></svg>
    <svg class="i12" viewBox="0 0 12 12"><path d="M8 3a4 4 0 1 0 2 3M5 7l5-5"/></svg><svg class="i4"><use href="#down"/></svg>
    <svg class="i12 push3" viewBox="0 0 12 12"><path d="M6 1v10M2 3l8 7"/></svg><svg class="i4 push3"><use href="#down"/></svg>
    <svg class="i12 blue" viewBox="0 0 12 12"><path d="M11 10H1l9-8"/></svg>
    <svg class="i12 blue" viewBox="0 0 12 12"><path d="M3 3h7v7H3zM1 1h3v3H1z"/></svg><svg class="i4 push3"><use href="#down"/></svg>
    <svg class="i12 blue push3" viewBox="0 0 12 12"><path d="M1 2h10M1 5h10M1 8.500h10" stroke-width="2"/></svg>
    <svg class="i12 push3" viewBox="0 0 12 12"><path stroke-dasharray="2 1" d="M1 1h10v10H1z"/><path d="M3 3l6 6M9 3L3 9"/></svg>
    <svg class="i12" viewBox="0 0 12 12"><path stroke-width="2" d="M2 11l4-9 3 9M3 8h5"/><path d="M8 2h3v2H8"/></svg>
    <svg class="i12" viewBox="0 0 12 12"><path stroke-width="2" d="M2 11l4-9 3 9M3 8h5"/><path d="M8 4h4M10 2v4"/></svg>
    <svg class="i12 push3" viewBox="0 0 12 12"><circle cx="6" cy="6" r="3" stroke-width="2"/><path stroke-width="2" d="M6 0v2M6 10v2M0 6h2M10 6h2M2 2l1 1M9 9l1 1M10 2L9 3M3 9l-1 1"/></svg><svg class="i4"><use href="#down"/></svg>
    <svg class="i12" viewBox="0 0 12 12"><path d="M6 1v10M1 6h10" stroke-width="2"/></svg>
    <svg class="i12 push3" viewBox="0 0 12 12"><path d="M1 2h4v3H1zM8 2h3v3H8zM4 8h4v3H4z"/></svg>
    <svg class="i12 push3" viewBox="0 0 12 12"><path fill="#eee" d="M2 1h4v9H2z"/><path fill="#6db4ef" d="M6 3h5v5H6z"/><path fill="#66b266" d="M6 9h5v2H6z"/></svg>
    <svg class="i12 push3" viewBox="0 0 12 12"><path class="amber" d="M2 3v8h9V7L6 5 3 7M1 3h4"/></svg>
    <svg class="i12 push3" viewBox="0 0 12 12"><path fill="#bbb" d="M3 9V5q1-4 4-3l2 7z"/><path fill="#e04c43" d="M8 8h3v3H8z"/></svg>
    <svg class="i12 push3" viewBox="0 0 12 12"><path d="M1 2h10v8H1zM3 7l2-2M7 6l2-2"/></svg>
    <svg class="i12" viewBox="0 0 12 12"><path d="M1 2h10M1 6h10M1 10h10"/></svg>
  </div>
</footer>
</body>
</html>
```

FILE: styles.css
```css
* { box-sizing: border-box; }
body {
  margin: 0; min-height: 100vh; display: flex; flex-direction: column;
  background: #363636; color: #e6e6e6;
  font: 7px/12px "Open Sans", "Noto Sans", sans-serif;
}
h1, h2, dl, dd, fieldset, legend { margin: 0; padding: 0; border: 0; font-size: inherit; font-weight: 400; }
button, input, select { font: inherit; color: inherit; margin: 0; padding: 0; border: 0; background: none; border-radius: 0; }
select { appearance: none; }
a { color: inherit; text-decoration: none; }
svg { display: block; flex: none; }
.defs { position: absolute; width: 0; height: 0; }
.st { fill: none; stroke: #8a8a8a; }
.fi { fill: #8e8e8e; }
.i4 { width: 4px; height: 4px; }
.i6 { width: 6px; height: 6px; }
.i8 { width: 8px; height: 8px; }
.i10 { width: 10px; height: 10px; }
.i12 { width: 12px; height: 12px; }
.i14 { width: 14px; height: 12px; }
.i20 { width: 20px; height: 20px; }
.i22 { width: 18px; height: 20px; }
.flip { transform: scaleX(-1); }
.side { transform: rotate(-90deg); }
.side2 { transform: rotate(90deg); }
.upside { transform: rotate(180deg); }
.dim { color: #858585; }
.plain { display: flex; align-items: center; white-space: nowrap; }

.head { display: grid; grid-template-columns: 25px 1fr; background: #4b4b4b; }
.app { grid-row: 1 / 3; display: flex; align-items: center; color: #ddd; background: linear-gradient(#a0a0a0, #595959); border: 1px solid #333; }
.titlebar { display: flex; height: 15px; background: #fff; }
.qat { display: flex; align-items: center; gap: 1px; padding: 0 3px 0 4px; color: #eee; background: linear-gradient(#777, #8e8e8e); }
.qat .i4 { margin-right: 2px; }
.qat .i14 { height: 11px; }
.title { flex: 1; display: flex; justify-content: center; align-items: center; gap: 8px; color: #222; white-space: nowrap; font-family: Roboto, sans-serif; font-size: 8px; }
.search { display: flex; align-items: center; gap: 1px; width: 279px; color: #f0f0f0; background: linear-gradient(#707070, #929292); }
.query { width: 112px; height: 13px; padding-left: 3px; background: #5b5b5b; font-style: italic; }
.query::placeholder { color: #cfcfcf; opacity: 1; }
.push { margin-left: 6px; }
.winbtns { width: 102px; display: flex; justify-content: space-around; padding-left: 14px; }
.tabs { display: flex; height: 12px; padding-left: 5px; align-items: stretch; white-space: nowrap; }
.tabs a { padding: 0 6px; color: #e2e2e2; }
.tabs .on { background: #727272; padding: 0 4px; font-weight: 600; }
.tabs .ctx { background: #51707f; font-weight: 600; }
.push2 { margin-left: 12px; }
.tabs .i4 { margin-top: 5px; }

.ribbon { display: flex; height: 63px; border-top: 1px solid #333; border-bottom: 1px solid #8b8b8b; background: #5b5b5b; color: #808080; }
.panel { display: flex; flex-direction: column; min-width: 0; border-right: 1px solid #474747; }
.w164 { flex: 164 1 0; } .w249 { flex: 249 1 0; } .w127 { flex: 127 1 0; } .w209 { flex: 209 1 0; }
.w78 { flex: 78 1 0; } .w151 { flex: 151 1 0; } .w48 { flex: 48 1 0; } .w65 { flex: 65 1 0; }
.w63 { flex: 63 1 0; } .w45 { flex: 46 1 0; }
.panel h2 { display: flex; justify-content: center; align-items: center; gap: 3px; height: 12px; color: #efefef; font-weight: 600; background: linear-gradient(#525252, #444); white-space: nowrap; }
.more::before { content: ""; width: 4px; margin-right: auto; }
.corner { margin-left: auto; padding-right: 1px; }
.tools { flex: 1; display: flex; padding-top: 4px; white-space: nowrap; }
.big { flex: none; display: flex; flex-direction: column; align-items: center; line-height: 10px; color: #7c7c7c; }
.big .i20 { margin-bottom: 2px; }
.big .i4 { color: #eee; margin-top: 1px; }
.bigA { height: 22px; font: 22px/22px Roboto, sans-serif; color: #999; }
.bigA + svg { margin: 0; }
.col { flex: none; display: flex; flex-direction: column; gap: 3px; }
.col > span { display: flex; align-items: center; gap: 3px; height: 12px; }
.col .i4 { color: #ddd; }
.gap { margin-left: 4px; }
.draw .big { width: 36px; } .draw .big + .big { width: 40px; }
.draw .big + .big + .big { width: 32px; } .draw .big + .big + .big + .big { width: 28px; }
.draw .col { padding-left: 4px; }
.draw .i4 { margin-left: 1px; }
.edit { padding-left: 4px; }
.edit .col { width: 63px; } .edit .col + .col { width: 90px; } .edit .col + .col + .col { width: 76px; } .edit .col:last-child { width: 12px; }
.anno { padding-left: 2px; }
.anno .big { width: 32px; } .anno .big + .big { width: 30px; }
.lays .big { width: 38px; }
.sp .i10 { margin-right: 2px; }
.drop { flex: 1; display: flex; align-items: center; gap: 3px; min-width: 0; height: 12px; padding: 0 2px; border: 1px solid #444; background: linear-gradient(#626262, #565656); color: #999; line-height: 10px; overflow: hidden; }
.layer { flex: none; width: 130px; gap: 5px; color: #8e8e8e; }
.end { margin-left: auto; color: #eee; }
.sw { flex: none; width: 9px; height: 9px; background: #b32bb3; border: 1px solid #777; }
.ind { margin: 0 4px; }
.ln { flex: none; width: 40px; height: 1px; background: #e0e0e0; }
.block .big { width: 32px; }
.propst .big { width: 52px; }
.col.grow { flex: 1; padding-right: 2px; }
.grps .big { width: 31px; }
.active { background: #5878a3; outline: 1px solid #7d9cc4; }
.utils { padding-right: 2px; }
.utils .big { flex: 1; }
.view { justify-content: center; }

.doctabs { display: flex; align-items: flex-end; height: 16px; padding-left: 10px; }
.doc { height: 14px; display: flex; align-items: center; white-space: nowrap; clip-path: polygon(6px 0, calc(100% - 6px) 0, 100% 100%, 0 100%); }
.start { width: 80px; padding-left: 10px; color: #a8a8a8; background: #505050; }
.cur { gap: 6px; padding: 0 9px 0 7px; background: linear-gradient(#808080, #626262); }
.plus { width: 14px; height: 9px; margin: 0 0 3px 3px; border-radius: 5px; background: #5d5d5d; line-height: 8px; }
.strip { height: 20px; padding: 2px 0; background: #5b5b5b; }
.pdfbar { display: inline-flex; align-items: center; gap: 2px; height: 15px; padding: 0 1px; border: 1px solid #444; background: #6c6c6c; }
.grip { width: 3px; height: 9px; border-left: 1px dotted #ccc; border-right: 1px dotted #ccc; }

.work { flex: 1; display: flex; min-height: 0; }
.props { flex: none; width: 212px; padding-right: 8px; background: #5b5b5b; border-right: 1px solid #444; }
.phead { margin-right: -8px; height: 13px; padding-left: 9px; background: #535353; color: #d8d8d8; }
.sel { display: grid; align-items: center; min-width: 0; }
.sel > select, .sel > input { grid-area: 1 / 1; width: 100%; min-width: 0; }
.sel > svg { grid-area: 1 / 1; justify-self: end; margin-right: 2px; pointer-events: none; }
.pick { display: flex; gap: 3px; align-items: center; margin: 7px 0 1px 10px; }
.pick .sel { flex: 1; margin-right: 2px; height: 15px; border: 1px solid #3f3f3f; background: linear-gradient(#7b7b7b, #666); padding-left: 2px; }
.props table { width: calc(100% - 10px); margin-left: 10px; table-layout: fixed; border-collapse: collapse; }
.props th { width: 95px; text-align: left; font-weight: 400; }
.props tr { height: 12px; }
.props tr:not(.sec) > * { padding: 0; height: 12px; line-height: 11px; border-bottom: 1px solid #515151; white-space: nowrap; overflow: hidden; }
.props tr:not(.sec) th { padding-left: 16px; }
.props td { border-left: 1px solid #515151; }
.props td .ln, .props td .sw { display: inline-block; vertical-align: middle; margin-right: 3px; }
.props td .bold { background: #fff; }
.props .sm { width: 7px; height: 7px; background: #ff00f0; border-color: #222; }
.props .sec th { height: 14px; padding: 0 5px; font-weight: 700; color: #f2f2f2; border: 1px solid #5b5b5b; border-width: 1px 0; background: #454545; line-height: 11px; }
.sec b { float: right; }
.ro { color: #a2a2a2; }

.canvas { position: relative; flex: 1; min-width: 0; background: #8a8a8a; overflow: hidden; }
.vpbtns { position: absolute; right: 5px; top: 5px; display: flex; gap: 5px; }
.ucs { position: absolute; left: 8px; bottom: 6px; width: 36px; height: 60px; }
.sheet { position: absolute; left: 331px; top: 204px; width: 320px; height: 226px; }
.code { font: 6px "Liberation Sans", sans-serif; fill: #888; }
.navbar { position: absolute; right: 2px; top: 161px; width: 22px; border: 1px solid #747474; border-radius: 3px; background: #a5a5a5; }
.cmd { position: absolute; left: 370px; bottom: 1px; width: 248px; height: 15px; display: flex; align-items: center; gap: 3px; padding-right: 2px; background: #dedede; color: #333; }
.cmdl { display: flex; align-items: center; gap: 5px; height: 15px; padding: 0 4px 0 2px; background: #666; color: #eee; }
.cmd input { flex: 1; min-width: 0; font: italic 8px "Liberation Mono", monospace; }
.cmd input::placeholder { color: #8d8d8d; opacity: 1; }

.dialog { position: absolute; left: 151px; top: 32px; width: 475px; background: #f0f0f0; color: #1b1b1b; box-shadow: 0 0 0 1px #666, 0 2px 7px rgba(0, 0, 0, .5); font-family: "Liberation Sans", sans-serif; }
.dtitle { display: flex; align-items: center; gap: 3px; height: 19px; padding: 0 5px 0 4px; background: #fff; font-family: "Open Sans", sans-serif; }
.dtitle button { margin-left: auto; }
.dbody { display: grid; grid-template-columns: 76px 208px 1fr; column-gap: 4px; padding: 3px 5px 5px 4px; }
.topbar { grid-column: 1 / 4; display: flex; align-items: center; height: 15px; }
.topbar label { flex: none; width: 82px; padding-right: 11px; text-align: right; }
.topbar .sel { flex: none; width: 171px; }
.sel .lead { grid-area: 1 / 1; justify-self: start; z-index: 1; margin-left: 2px; }
.dialog .sel { height: 13px; border: 1px solid #a9a9a9; background: #e3e3e3; }
.dialog .sel > select, .dialog .sel > input { padding-left: 2px; height: 11px; }
.dialog .pic > select { padding-left: 14px; }
.dtools { display: flex; gap: 6px; margin: 0 7px 0 10px; }
.gray { color: #777; }
.menu { gap: 7px; margin-right: 8px; }
.places { grid-row: 2 / 4; display: flex; flex-direction: column; align-items: center; gap: 6px; margin: 2px 2px 9px 0; padding-top: 4px; background: #bccada; border: 1px solid #d4dce4; border-top-color: #9aa6b3; color: #fff; }
.places a { display: flex; flex-direction: column; align-items: center; line-height: 12px; }
.places svg { margin-bottom: 1px; }
.files { display: flex; flex-direction: column; margin-top: 4px; font-family: "Open Sans", sans-serif; background: #fff; }
.files table { border-collapse: collapse; table-layout: fixed; width: 100%; }
.files th, .files td { height: 12px; padding: 0 0 0 4px; line-height: 12px; overflow: hidden; white-space: nowrap; text-align: left; font-weight: 400; }
.files th { width: 170px; height: 15px; }
.files th + th { width: auto; }
.files th + th, .files td + td { padding-left: 1px; }
.files td .i10 { display: inline-block; vertical-align: middle; margin: 0 2px; }
.sort { display: inline-block; vertical-align: top; margin-left: 64px; transform: rotate(180deg); }
.hscroll { display: flex; align-items: center; gap: 3px; height: 10px; margin-top: auto; padding: 0 4px 0 3px; background: #f1f1f1; }
.hscroll i { width: 99px; height: 10px; background: #cdcdcd; margin-right: auto; }
.opts { padding: 12px 0 3px; min-width: 0; }
.cap { display: block; margin-bottom: 2px; }
.opts > .sel { width: 163px; }
.dialog .focus select { outline: 1px dotted #333; width: calc(100% - 12px); }
.opts fieldset { margin-top: 4px; padding: 4px 7px 5px 3px; border: 1px solid #dcdcdc; min-width: 0; }
.opts legend { margin-left: 1px; padding: 0 2px; line-height: 10px; }
.opts dl { display: grid; grid-template-columns: 91px 1fr; }
.opts .out { margin-top: 2px; padding: 0 7px 2px 4px; }
.btn { height: 14px; border: 1px solid #adadad; background: #e2e2e2; line-height: 12px; text-align: center; white-space: nowrap; }
.set { display: block; width: 69px; margin-top: 3px; }
.chk { display: flex; align-items: center; gap: 2px; white-space: nowrap; height: 13px; }
.chk input { appearance: none; flex: none; width: 8px; height: 8px; border: 1px solid #333; background: #fff; }
.chk input:checked::before { content: "✓"; display: block; font: 7px/6px "DejaVu Sans", sans-serif; color: #222; }
.stamp { display: flex; justify-content: space-between; align-items: center; height: 17px; padding-right: 1px; }
.stamp .chk { padding-top: 4px; }
.sq { display: grid; place-items: center; width: 15px; }
.off { opacity: .75; }
.row { display: flex; align-items: center; margin-top: 3px; line-height: 8px; }
.row label { flex: none; width: 48px; }
.row .sel { flex: 1; line-height: 12px; }
.exp .btn { margin-left: 3px; }
.row .off { background: #ccc; color: #666; opacity: 1; }
.opts hr { margin: 7px 0 6px; border: 0; border-top: 1px solid #aaa; }
.wide { display: block; width: calc(100% - 7px); margin: 4px 0 0 3px; background: #ccc; color: #888; border-color: #c4c4c4; }
.bottom { grid-column: 2 / 4; display: grid; grid-template-columns: 53px 1fr 61px; gap: 7px 0; align-items: center; margin-top: 9px; padding-right: 5px; }
.bottom .sel { margin-right: 8px; }
.dialog .white { background: #fff; border-color: #777; }
.marks { position: absolute; left: 0; top: 0; width: 475px; height: 331px; pointer-events: none; }
.marks path { fill: none; stroke: #ffdf66; stroke-width: 8px; stroke-linecap: round; opacity: .7; }

.foot { display: flex; justify-content: space-between; height: 16px; background: #363636; }
.ltabs { display: flex; padding-left: 4px; height: 13px; }
.ltabs a { width: 22px; text-align: center; color: #b5b5b5; background: #565656; margin-right: -1px; clip-path: polygon(0 0, 100% 0, calc(100% - 4px) 100%, 4px 100%); }
.ltabs a:first-child { width: 46px; }
.ltabs .on { background: #888; color: #fff; font-weight: 700; }
.status { display: flex; align-items: center; gap: 3px; padding: 0 4px; background: #4d4d4d; color: #eee; }
.status b { margin-right: 2px; font-size: 8px; }
.status path:not([fill]), .status circle { fill: none; stroke: #d8d8d8; }
.status path.amber { stroke: #e9b25e; }
.status .blue { background: #4d80ba; outline: 1px solid #4d80ba; }
.push3 { margin-left: 2px; }
```
